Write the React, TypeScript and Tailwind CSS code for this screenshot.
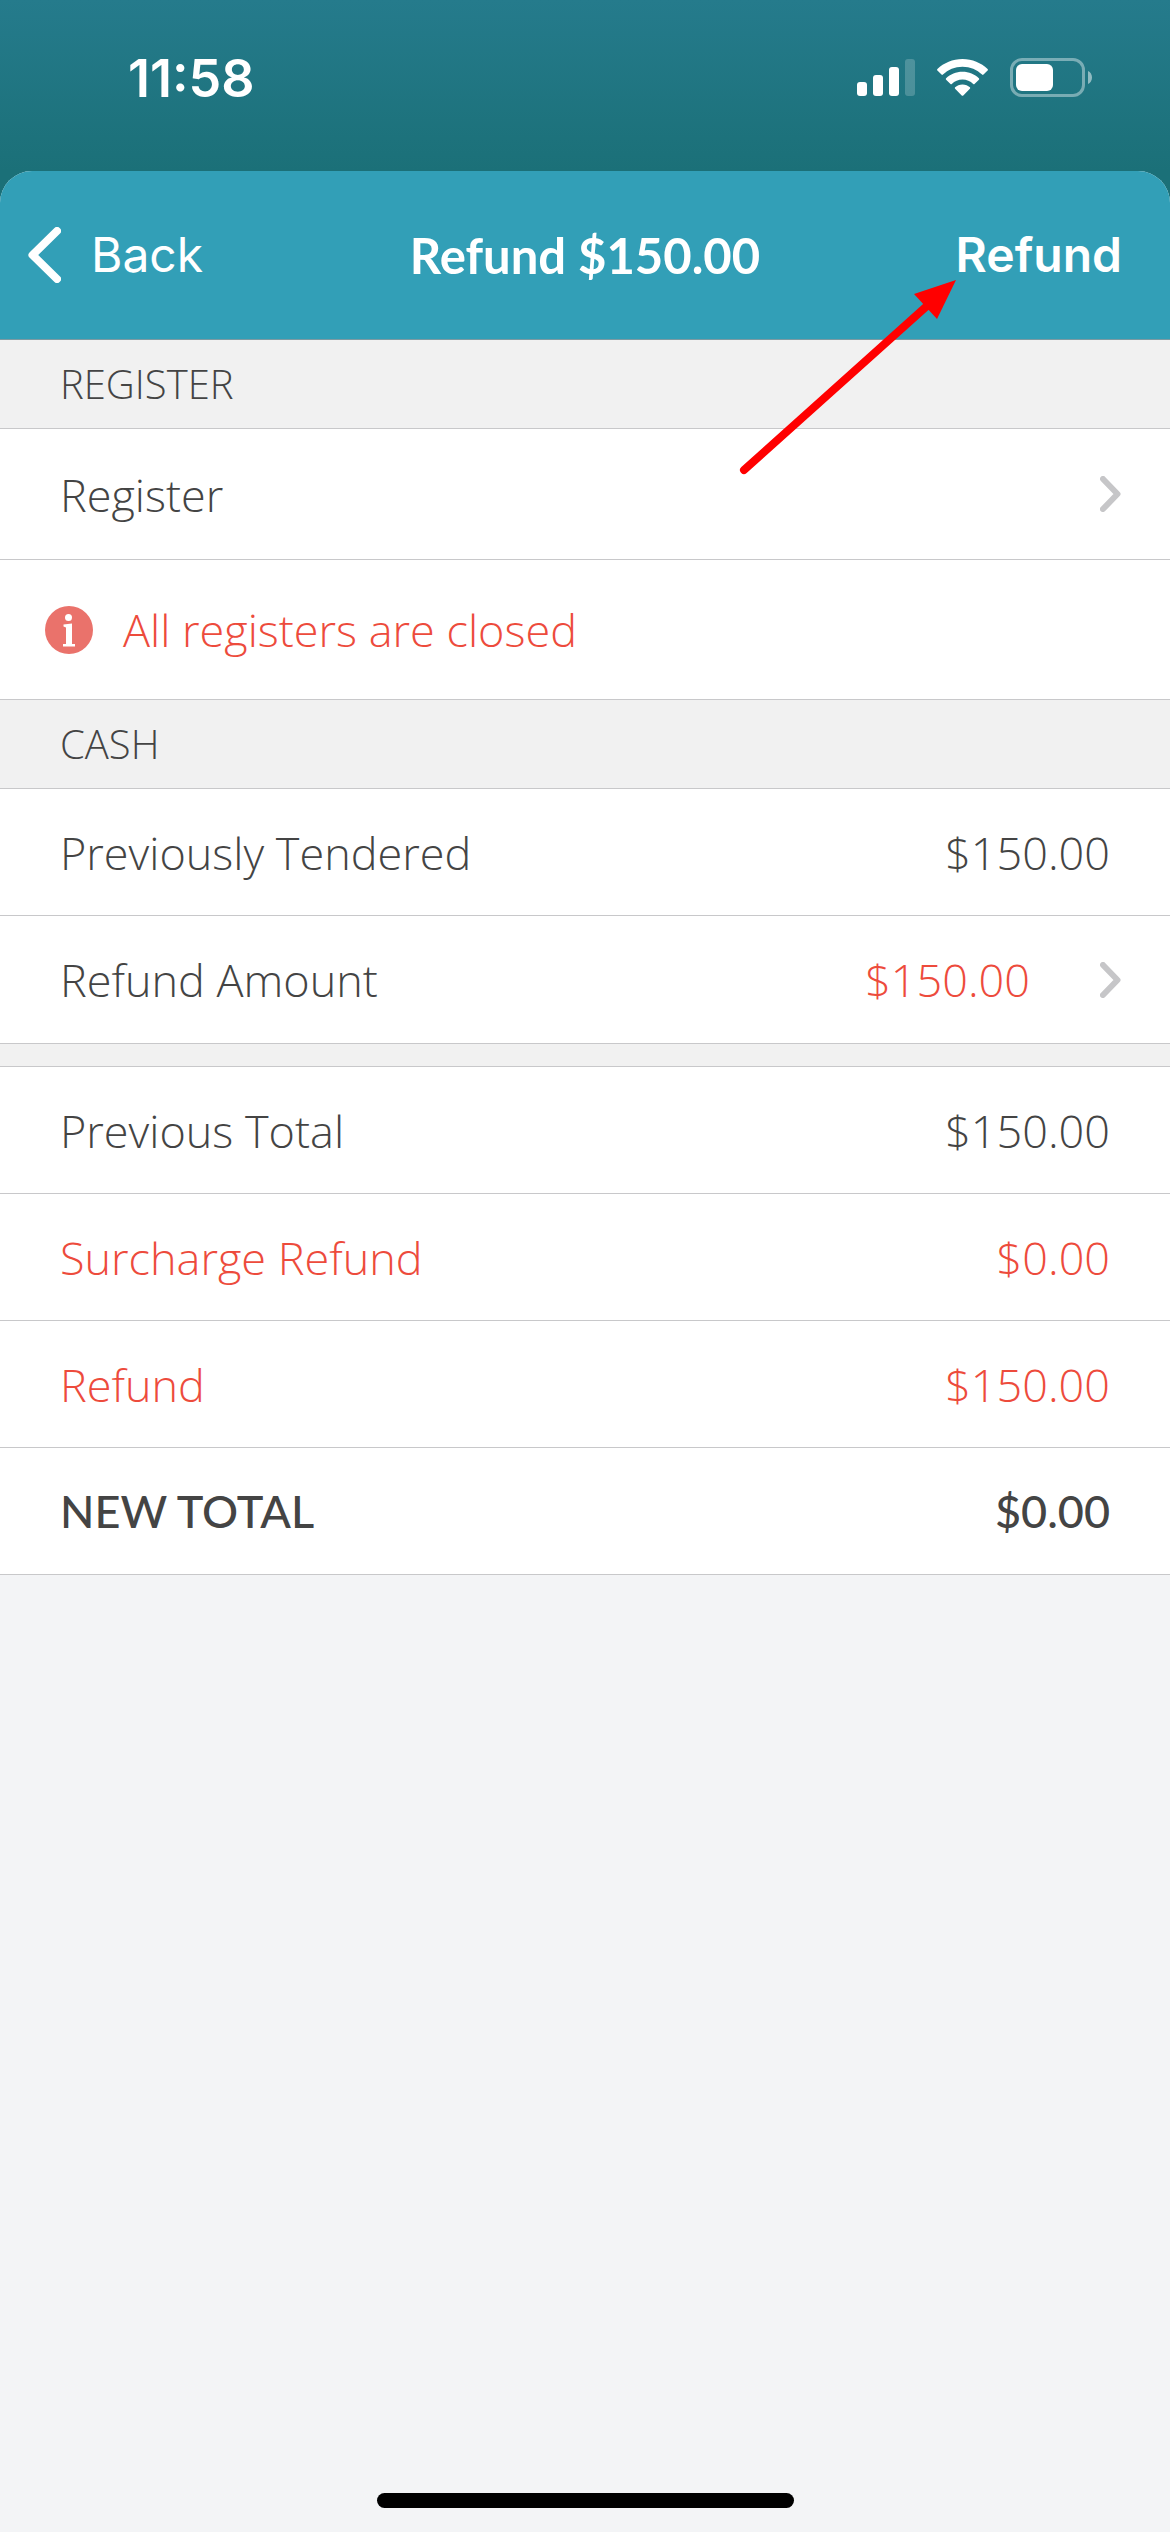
import React from 'react';

type RowProps = {
  label: string;
  amount: string;
  tone?: 'default' | 'refund' | 'total';
};

const tones = {
  default: 'font-light text-[#444444]',
  refund: 'font-light text-[#ed4b3c]',
  total: "font-['Lato',sans-serif] font-medium text-[#444444]",
};

const Chevron: React.FC = () => (
  <svg viewBox="0 0 21 36" className="w-[21px] h-9 shrink-0" fill="none" aria-hidden="true">
    <path d="M3 3L17.5 18L3 33" stroke="#c6c6c8" strokeWidth="6" strokeLinecap="round" strokeLinejoin="round" />
  </svg>
);

const SectionHeader: React.FC<{ title: string }> = ({ title }) => (
  <h2 className="h-[89px] flex items-center pl-15 bg-[#f1f1f1] border-b border-[#c8c8ca] text-[40px] leading-none font-light text-[#444444]">
    {title}
  </h2>
);

const AmountRow: React.FC<RowProps> = ({ label, amount, tone = 'default' }) => (
  <div className={`h-[127px] flex items-center justify-between pl-15 pr-15 bg-white border-b border-[#c8c8ca] ${tones[tone]}`}>
    <dt>{label}</dt>
    <dd>{amount}</dd>
  </div>
);

const StatusBar: React.FC = () => (
  <div className="h-[171px] flex justify-between pl-32 pr-[77px] pt-[53px] text-white">
    <span className="font-['Inter',sans-serif] text-[52px] leading-[52px] font-semibold">11:58</span>
    <div className="flex gap-[22px] pt-1">
      <svg viewBox="0 0 58 42" className="w-[58px] h-[42px]" fill="currentColor" aria-hidden="true">
        <rect x="0" y="25" width="10" height="14" rx="3" />
        <rect x="16" y="18" width="10" height="21" rx="3" />
        <rect x="32" y="10" width="10" height="29" rx="3" />
        <rect x="48" y="2" width="10" height="37" rx="3" opacity="0.2" />
      </svg>
      <svg viewBox="0 0 51 42" className="w-[51px] h-[42px]" fill="currentColor" aria-hidden="true">
        <path d="M25.500 2C35.300 2 44.200 5.800 50.600 12.100Q51.300 12.900 50.600 13.600L46.500 17.600Q45.800 18.200 45.100 17.600C40 12.700 33.100 9.700 25.500 9.700S11 12.700 5.900 17.600Q5.200 18.200 4.500 17.600L0.400 13.600Q-0.300 12.900 0.400 12.100C6.800 5.800 15.700 2 25.500 2Z" />
        <path d="M25.500 14.700C31.900 14.700 37.700 17.200 41.900 21.200Q42.600 22 41.900 22.700L37.500 26.900Q36.900 27.500 36.200 26.900C33.400 24.200 29.600 22.600 25.500 22.600S17.600 24.200 14.800 26.900Q14.100 27.500 13.500 26.900L9.100 22.700Q8.400 22 9.100 21.200C13.300 17.200 19.100 14.700 25.500 14.700Z" />
        <path d="M25.500 27.500C28.500 27.500 31 28.600 32.900 30.300Q33.600 31 32.900 31.700L26.300 38.400Q25.500 39.200 24.700 38.400L18.100 31.700Q17.400 31 18.100 30.300C20 28.600 22.500 27.500 25.500 27.500Z" />
      </svg>
      <svg viewBox="0 0 83 42" className="w-[83px] h-[42px]" aria-hidden="true">
        <rect x="1.500" y="2.500" width="72" height="36" rx="10.500" fill="none" stroke="white" strokeOpacity="0.4" strokeWidth="3" />
        <rect x="6" y="7" width="37" height="27" rx="6" fill="white" />
        <path d="M78 14C80.500 15.200 82 17.500 82 20.500S80.500 25.800 78 27Z" fill="white" fillOpacity="0.5" />
      </svg>
    </div>
  </div>
);

// pointer from the register row up to the Refund action
const Arrow: React.FC = () => (
  <svg
    viewBox="0 0 224 200"
    className="absolute top-[105px] right-[210px] w-56 h-50 pointer-events-none"
    fill="none"
    aria-hidden="true"
  >
    <path d="M8 194L192 29" stroke="#ff0000" strokeWidth="8" strokeLinecap="round" />
    <path d="M220 4L178 18L201 43Z" fill="#ff0000" />
  </svg>
);

export default function App() {
  return (
    <div className="min-h-screen flex flex-col bg-linear-to-b from-[#257b8c] to-[#1b7078] to-[171px] font-['Open_Sans',sans-serif] text-[45px] leading-none">
      <StatusBar />

      <main className="relative grow flex flex-col rounded-t-[32px] bg-[#f3f4f6]">
        <header className="h-[169px] grid grid-cols-[1fr_auto_1fr] items-center px-7 rounded-t-[32px] bg-[#329fb7] border-b border-[#7d9aa2] text-white">
          <button type="button" className="justify-self-start flex items-center gap-[30px] font-['Inter',sans-serif] text-[48px] leading-none">
            <svg viewBox="0 0 33 56" className="w-[33px] h-14" fill="none" aria-hidden="true">
              <path d="M29 4L4.500 28L29 52" stroke="currentColor" strokeWidth="8" strokeLinecap="round" strokeLinejoin="round" />
            </svg>
            Back
          </button>
          <h1 className="font-['Lato',sans-serif] text-[49px] font-bold">Refund $150.00</h1>
          <button type="button" className="justify-self-end pr-5 font-['Inter',sans-serif] text-[48px] leading-none font-semibold">
            Refund
          </button>
        </header>

        <section>
          <SectionHeader title="REGISTER" />
          <button
            type="button"
            className="w-full h-[131px] flex items-center justify-between pl-15 pr-[49px] bg-white border-b border-[#c8c8ca] font-light text-[#444444]"
          >
            Register
            <Chevron />
          </button>
          <p className="h-[140px] flex items-center gap-[30px] pl-[45px] bg-white border-b border-[#c8c8ca] font-light text-[#ed4b3c]">
            <svg viewBox="0 0 48 48" className="w-12 h-12" aria-hidden="true">
              <circle cx="24" cy="24" r="24" fill="#ea726b" />
              <circle cx="23.500" cy="11.500" r="3.500" fill="white" />
              <path d="M18.500 18.500L27 17.500V38H30V40.500H18V38H21V21.500L18.500 20.500Z" fill="white" />
            </svg>
            All registers are closed
          </p>
        </section>

        <section>
          <SectionHeader title="CASH" />
          <dl>
            <AmountRow label="Previously Tendered" amount="$150.00" />
          </dl>
          <button
            type="button"
            className="w-full h-32 flex items-center pl-15 pr-[49px] bg-white border-b border-[#c8c8ca] font-light text-[#444444]"
          >
            Refund Amount
            <span className="ml-auto mr-[70px] text-[#ed4b3c]">$150.00</span>
            <Chevron />
          </button>
        </section>

        <dl className="pt-[22px] bg-[#f1f1f1]">
          <div className="border-t border-[#c8c8ca]">
            <AmountRow label="Previous Total" amount="$150.00" />
            <AmountRow label="Surcharge Refund" amount="$0.00" tone="refund" />
            <AmountRow label="Refund" amount="$150.00" tone="refund" />
            <AmountRow label="NEW TOTAL" amount="$0.00" tone="total" />
          </div>
        </dl>

        <div className="mt-auto mb-6 self-center w-[417px] h-[15px] rounded-full bg-black" />
        <Arrow />
      </main>
    </div>
  );
}
